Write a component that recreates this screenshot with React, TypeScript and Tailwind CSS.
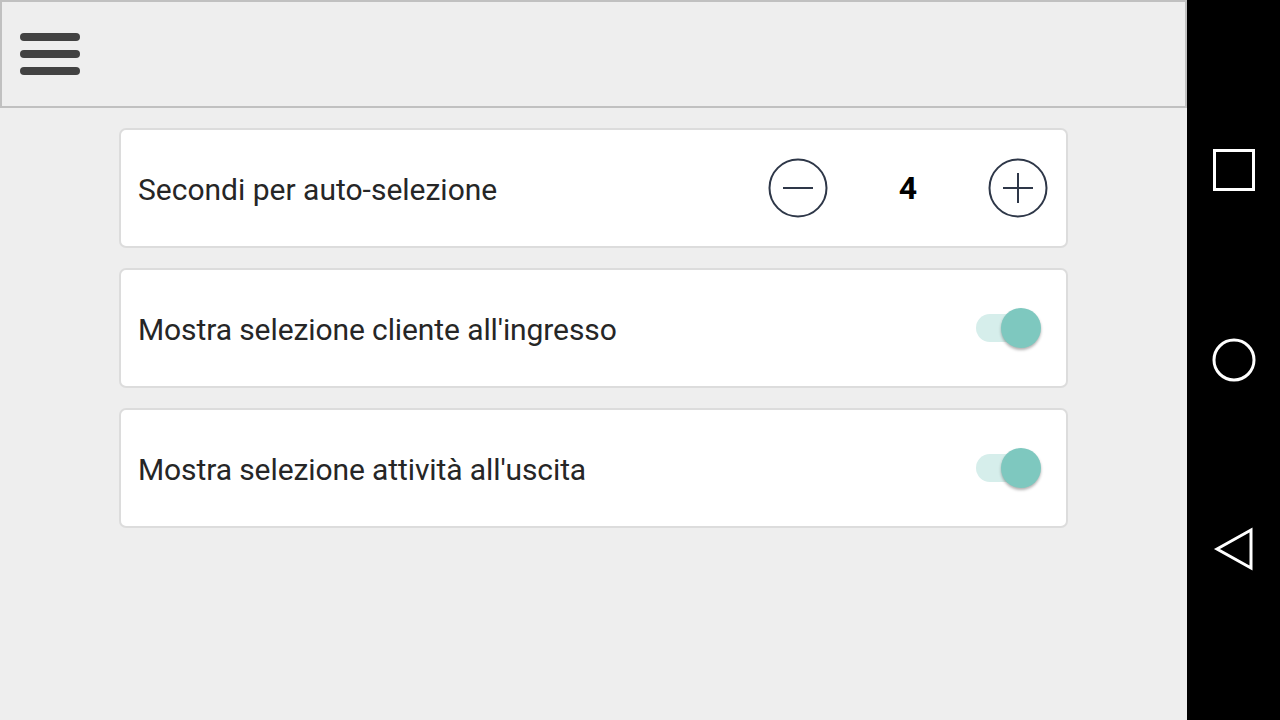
import { useState } from "react";

const Toggle = ({ on }: { on: boolean }) => {
  return (
    <div className="relative w-[66px] h-[44px] flex items-center">
      <div className={`w-[54px] h-[28px] rounded-full ${on ? "bg-[#d6eeeb]" : "bg-[#ddd]"}`} />
      <div
        className={`absolute top-[2px] ${on ? "right-[1px]" : "left-0"} w-[40px] h-[40px] rounded-full bg-[#7ec8bf] shadow-[0_2px_3px_rgba(0,0,0,0.3)]`}
      />
    </div>
  );
};

const CircleBtn = ({ plus }: { plus?: boolean }) => (
  <svg width="60" height="60" viewBox="0 0 60 60" fill="none" stroke="#2e3748" strokeWidth="2">
    <circle cx="30" cy="30" r="28.5" />
    <line x1="15" y1="30" x2="45" y2="30" />
    {plus && <line x1="30" y1="15" x2="30" y2="45" />}
  </svg>
);

export default function App() {
  const [secs, setSecs] = useState(4);
  return (
    <div className="w-[1280px] h-[720px] flex bg-[#eeeeee] font-['Roboto',sans-serif] overflow-hidden">
      <div className="w-[1187px] flex flex-col">
        {/* top bar */}
        <div className="h-[108px] border-2 border-[#c0c0c0] flex items-center pl-[18px]">
          <div className="flex flex-col gap-[9px]">
            <div className="w-[60px] h-[8px] rounded-full bg-[#424242]" />
            <div className="w-[60px] h-[8px] rounded-full bg-[#424242]" />
            <div className="w-[60px] h-[8px] rounded-full bg-[#424242]" />
          </div>
        </div>
        {/* settings */}
        <div className="flex flex-col items-center gap-[20px] pt-[20px]">
          <div className="w-[949px] h-[120px] bg-white border-2 border-[#dcdcdc] rounded-[7px] flex items-center pl-[17px] pr-[18px]">
            <span className="text-[30px] text-[#262626] flex-1 pt-[2px]">Secondi per auto-selezione</span>
            <button onClick={() => setSecs(Math.max(0, secs - 1))}>
              <CircleBtn />
            </button>
            <span className="w-[160px] text-center text-[32px] font-bold text-black">{secs}</span>
            <button onClick={() => setSecs(secs + 1)}>
              <CircleBtn plus />
            </button>
          </div>
          <div className="w-[949px] h-[120px] bg-white border-2 border-[#dcdcdc] rounded-[7px] flex items-center pl-[17px] pr-[24px]">
            <span className="text-[30px] tracking-[-0.1px] text-[#262626] flex-1 pt-[2px]">Mostra selezione cliente all'ingresso</span>
            <Toggle on />
          </div>
          <div className="w-[949px] h-[120px] bg-white border-2 border-[#dcdcdc] rounded-[7px] flex items-center pl-[17px] pr-[24px]">
            <span className="text-[30px] tracking-[-0.1px] text-[#262626] flex-1 pt-[2px]">Mostra selezione attività all'uscita</span>
            <Toggle on />
          </div>
        </div>
      </div>
      {/* android nav bar */}
      <div className="flex-1 bg-black flex flex-col items-center justify-between pt-[148px] pb-[149px]">
        <svg width="44" height="44" viewBox="0 0 44 44" fill="none" stroke="white" strokeWidth="3">
          <rect x="2.5" y="2.5" width="39" height="39" />
        </svg>
        <svg width="46" height="46" viewBox="0 0 46 46" fill="none" stroke="white" strokeWidth="3">
          <circle cx="23" cy="23" r="20" />
        </svg>
        <svg width="42" height="44" viewBox="0 0 42 44" fill="none" stroke="white" strokeWidth="3" strokeLinejoin="miter">
          <polygon points="4,22 38,3 38,41" />
        </svg>
      </div>
    </div>
  );
}
